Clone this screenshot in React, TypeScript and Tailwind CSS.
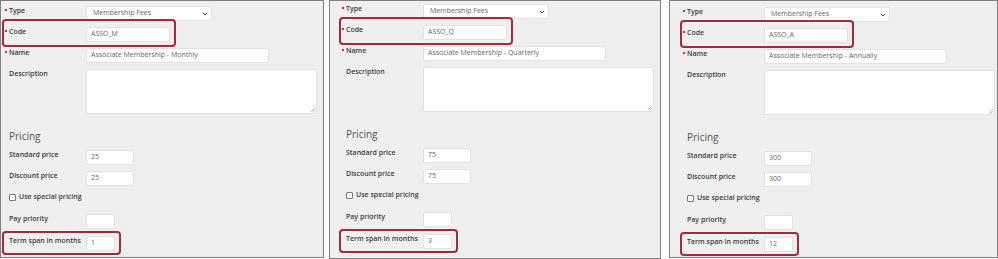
import React from "react";

type P = { cls: string; code: string; name: string; price: string; term: string };

function Dot() {
  return <span className="inline-block w-[2px] h-[2px] bg-[#e0262f] -ml-[4px] mr-[2px] align-[2px]" />;
}

function Label({ children, req }: { children: React.ReactNode; req?: boolean }) {
  return (
    <div className="w-[77px] shrink-0 text-[7px] leading-[10px] font-semibold text-[#3b3b3b] whitespace-nowrap">
      {req && <Dot />}
      {children}
    </div>
  );
}

function Input({ w, value }: { w: string; value?: string }) {
  return (
    <div className={`${w} h-[15px] shrink-0 bg-white border border-[#e2e2e2] rounded-[2px] pl-[4px] flex items-center text-[7px] text-[#666] whitespace-nowrap`}>
      {value}
    </div>
  );
}

function Panel({ cls, code, name, price, term }: P) {
  return (
    <div className={`${cls} bg-[#efefef] border border-[#7f7f7f] flex flex-col shrink-0`}>
      <div className="flex items-start">
        <Label req>Type</Label>
        <div className="w-[126px] h-[15px] bg-white border border-[#e2e2e2] rounded-[2px] pl-[6px] pr-[3px] flex items-center justify-between text-[7px] text-[#666]">
          <span>Membership Fees</span>
          <svg width="6" height="4" viewBox="0 0 6 4">
            <path d="M0.8 0.8 L3 3 L5.2 0.8" stroke="#444" strokeWidth="1" fill="none" />
          </svg>
        </div>
      </div>
      <div className="-mt-[2px] -ml-[7px] w-fit border-2 border-[#a02b3b] rounded-[4px] pl-[5px] pr-[4px] pt-[6px] pb-[3px] flex items-start">
        <Label req>Code</Label>
        <Input w="w-[84px]" value={code} />
      </div>
      <div className="mt-[1px] flex items-start">
        <Label req>Name</Label>
        <Input w="w-[183px]" value={name} />
      </div>
      <div className="mt-[6px] flex items-start">
        <Label>Description</Label>
        <div className="relative w-[231px] h-[45px] bg-white border border-[#e2e2e2] rounded-[2px]">
          <svg className="absolute right-[1px] bottom-[1px]" width="5" height="5" viewBox="0 0 5 5">
            <path d="M1 5 L5 1 M3 5 L5 3" stroke="#aaa" strokeWidth="0.7" />
          </svg>
        </div>
      </div>
      <div className="mt-[15px] text-[10px] leading-[14px] text-[#555]">Pricing</div>
      <div className="mt-[7px] flex items-start">
        <Label>Standard price</Label>
        <Input w="w-[48px]" value={price} />
      </div>
      <div className="mt-[6px] flex items-start">
        <Label>Discount price</Label>
        <Input w="w-[48px]" value={price} />
      </div>
      <div className="mt-[6px] h-[10px] flex items-center gap-[3px]">
        <div className="w-[7px] h-[7px] bg-white border border-[#7a7a7a] rounded-[1px]" />
        <span className="text-[7px] font-semibold text-[#3b3b3b] leading-[10px]">Use special pricing</span>
      </div>
      <div className="mt-[12px] flex items-start">
        <Label>Pay priority</Label>
        <Input w="w-[29px]" />
      </div>
      <div className="mt-[2px] -ml-[7px] w-fit border-2 border-[#a02b3b] rounded-[4px] pl-[5px] pr-[4px] pt-[3px] pb-[2px] flex items-start">
        <Label>Term span in months</Label>
        <Input w="w-[29px]" value={term} />
      </div>
    </div>
  );
}

export default function App() {
  return (
    <div className="w-[998px] h-[259px] bg-white flex items-start font-['Open_Sans',sans-serif]">
      <Panel cls="w-[324px] h-[258px] pl-[8px] pt-[5px]" code="ASSO_M" name="Associate Membership - Monthly" price="25" term="1" />
      <Panel cls="w-[332px] h-[259px] ml-[5px] pl-[16px] pt-[3px]" code="ASSO_Q" name="Associate Membership - Quarterly" price="75" term="3" />
      <Panel cls="w-[329px] h-[258px] ml-[8px] pl-[17px] pt-[6px]" code="ASSO_A" name="Associate Membership - Annually" price="300" term="12" />
    </div>
  );
}
